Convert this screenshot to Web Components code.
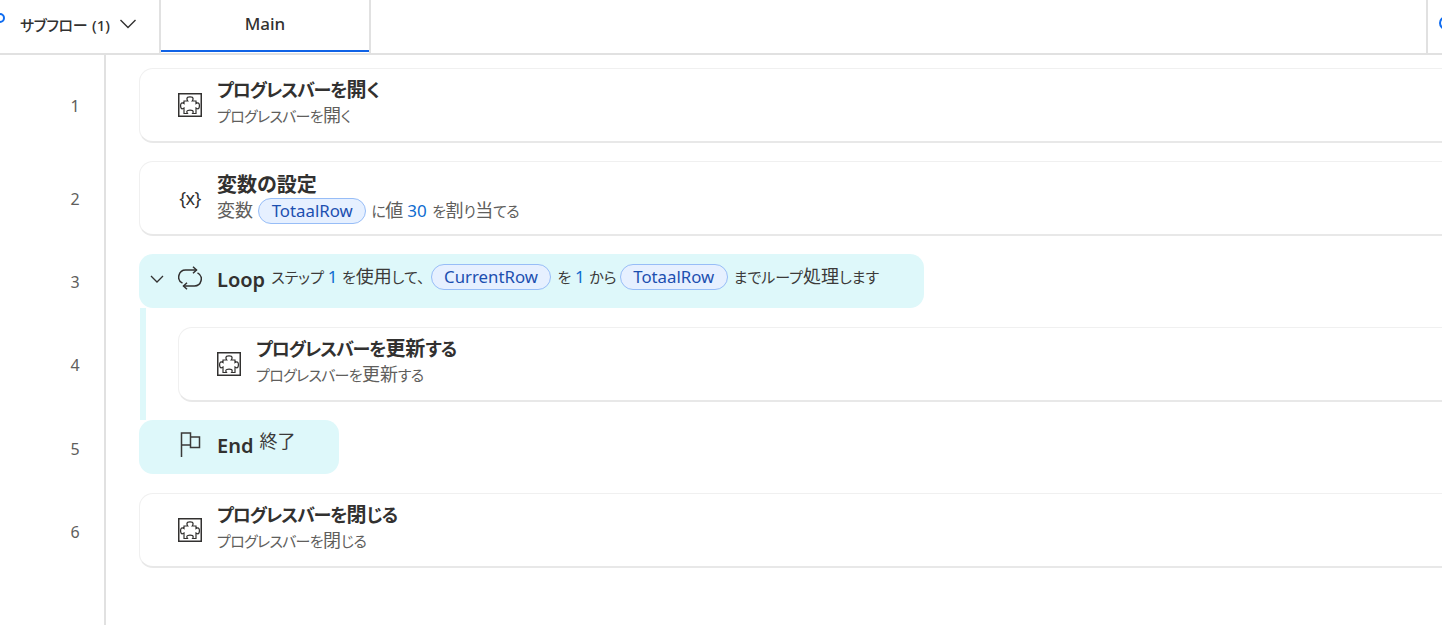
<!DOCTYPE html>
<html lang="ja">
<head>
<meta charset="utf-8">
<title>Main</title>
<style>
  html, body { margin: 0; height: 100%; overflow: hidden; background: #fff; }
  body { font-family: "Noto Sans", "Noto Sans CJK JP", sans-serif; color: #323130; }
  /* kanji run wider than kana in the reference font, so they get their own size */
  .k { font-size: var(--kanji-size, 1em); letter-spacing: 0; }
  .comma { margin-right: 4px; }
</style>
</head>
<body>
<flow-app>
  <flow-tabbar slot="top"></flow-tabbar>
  <flow-row num="1" kind="card">
    <flow-card icon="puzzle">
      <span slot="title">プログレスバーを<span class="k">開</span>く</span>
      プログレスバーを<span class="k">開</span>く
    </flow-card>
  </flow-row>
  <flow-row num="2" kind="card">
    <flow-card icon="vars" chips>
      <span slot="title"><span class="k">変数の設定</span></span>
      <span class="k">変数</span> <flow-chip>TotaalRow</flow-chip> に<span class="k">値</span> <flow-num>30</flow-num> を<span class="k">割</span>り<span class="k">当</span>てる
    </flow-card>
  </flow-row>
  <flow-row num="3" kind="head">
    <flow-block icon="loop" chevron>
      <span slot="title">Loop</span>
      ステップ <flow-num>1</flow-num> を<span class="k">使用</span>して<span class="comma">、</span><flow-chip>CurrentRow</flow-chip> を <flow-num>1</flow-num> から<flow-chip style="margin-left: 3px">TotaalRow</flow-chip> までループ<span class="k">処理</span>します
    </flow-block>
  </flow-row>
  <flow-row num="4" kind="nested">
    <flow-card icon="puzzle">
      <span slot="title">プログレスバーを<span class="k">更新</span>する</span>
      プログレスバーを<span class="k">更新</span>する
    </flow-card>
  </flow-row>
  <flow-row num="5" kind="tail">
    <flow-block icon="flag">
      <span slot="title">End</span>
      <span class="k">終了</span>
    </flow-block>
  </flow-row>
  <flow-row num="6" kind="last">
    <flow-card icon="puzzle">
      <span slot="title">プログレスバーを<span class="k">閉</span>じる</span>
      プログレスバーを<span class="k">閉</span>じる
    </flow-card>
  </flow-row>
</flow-app>

<script>
const ICONS = {
  puzzle: `<svg width="24" height="24" viewBox="0 0 24 24" fill="none" stroke="#323130">
    <rect x="0.75" y="0.75" width="22.5" height="22.5" stroke-width="1.5"/>
    <path stroke-width="1.2" d="M6 8H9.8C9.2 7.2 8.9 6.6 8.9 5.8C8.9 3.3 15.1 3.3 15.1 5.8C15.1 6.6 14.8 7.2 14.2 8H18V10.5C18.7 10 19.2 9.8 19.7 9.8C22 9.8 22 15.8 19.7 15.8C19.2 15.8 18.7 15.6 18 15.1V20.5H14.6C15.1 19.8 15.2 19.3 15.2 18.8C15.2 16.6 8.8 16.6 8.8 18.8C8.8 19.3 9 19.8 9.5 20.5H6V15.1C5.3 15.6 4.8 15.8 4.3 15.8C2 15.8 2 9.8 4.3 9.8C4.8 9.8 5.3 10 6 10.5Z"/>
  </svg>`,
  loop: `<svg width="24" height="24" viewBox="0 0 24 24" fill="none" stroke="#323130" stroke-width="1.5">
    <path d="M18.5 4H8A7 7 0 0 0 4.5 17.2"/>
    <path d="M15 0.8L18.5 4L15 7.2"/>
    <path d="M5.5 20H16A7 7 0 0 0 19.5 6.8"/>
    <path d="M9 16.8L5.5 20L9 23.2"/>
  </svg>`,
  flag: `<svg width="24" height="26" viewBox="0 0 24 26" fill="none" stroke="#3b3a39" stroke-width="1.5">
    <path d="M3.5 25V1H12.5V15.5H21.5V5H12.5"/>
    <path d="M3.5 13H12.5"/>
  </svg>`
};

class FlowApp extends HTMLElement {
  constructor() {
    super();
    this.attachShadow({ mode: 'open' });
    this.shadowRoot.innerHTML = `
      <style>
        :host { display: flex; flex-direction: column; height: 100vh; overflow: hidden; }
        .body { flex: 1; position: relative; display: flex; flex-direction: column; padding-top: 4px; overflow: hidden; }
        .body::before { content: ""; position: absolute; left: 104px; top: 0; bottom: 0; width: 2px; background: #e1e1e1; }
      </style>
      <slot name="top"></slot>
      <div class="body"><slot></slot></div>
    `;
  }
}

class FlowTabbar extends HTMLElement {
  constructor() {
    super();
    this.attachShadow({ mode: 'open' });
    this.shadowRoot.innerHTML = `
      <style>
        :host { display: flex; height: 53px; border-bottom: 2px solid #e1e1e1; overflow: hidden; flex: none; }
        .sub { width: 159px; flex: none; display: flex; align-items: center; gap: 9px; padding: 0 0 5px 20px; box-sizing: border-box; position: relative; font-weight: 500; font-size: 15px; white-space: nowrap; }
        .kana { letter-spacing: -0.4px; font-feature-settings: "palt"; margin-right: 1px; }
        .dot { position: absolute; left: -5px; top: 13px; width: 6px; height: 6px; border: 2px solid #0f6cf0; border-radius: 50%; }
        .main { width: 208px; flex: none; border-left: 2px solid #e1e1e1; border-right: 2px solid #e1e1e1; display: flex; align-items: center; justify-content: center; padding-bottom: 6px; font-weight: 500; font-size: 17px; position: relative; box-sizing: content-box; }
        .main::after { content: ""; position: absolute; left: 0; right: 0; bottom: 1px; height: 2px; background: #0f62e6; }
        .rest { flex: 1; display: flex; justify-content: flex-end; }
        .edge { width: 14px; border-left: 2px solid #e1e1e1; position: relative; }
        .edge::after { content: ""; position: absolute; left: 11px; top: 16px; width: 10px; height: 10px; border: 2.5px solid #0f6cf0; border-radius: 50%; }
      </style>
      <div class="sub">
        <span class="dot"></span>
        <span><span class="kana">サブフロー</span> (1)</span>
        <svg width="18" height="18" viewBox="0 0 18 18" fill="none" stroke="#323130" stroke-width="1.4"><path d="M1.5 5L9 12.5L16.5 5"/></svg>
      </div>
      <div class="main">Main</div>
      <div class="rest"><div class="edge"></div></div>
    `;
  }
}

class FlowRow extends HTMLElement {
  static get observedAttributes() { return ['num']; }
  constructor() {
    super();
    this.attachShadow({ mode: 'open' });
    this.shadowRoot.innerHTML = `
      <style>
        :host { display: flex; flex: none; }
        .num { width: 106px; flex: none; box-sizing: border-box; padding-left: 44px; font-size: 16px; color: #605e5c; display: flex; align-items: center; justify-content: center; }
        .slot { flex: 1; min-width: 0; padding-left: 33px; margin-right: -30px; }
        :host([kind="card"]) .slot { padding-top: 9px; padding-bottom: 9px; }
        :host([kind="head"]) .slot { padding-top: 9px; }
        :host([kind="head"]) .num { padding-top: 11px; }
        :host([kind="nested"]) .slot { margin-left: 34px; padding: 19px 0 18px 32px; border-left: 6px solid #def8fa; }
        :host([kind="nested"]) .num { padding-top: 2px; }
        :host([kind="tail"]) .num { padding-top: 4px; }
        :host([kind="last"]) .slot { padding-top: 19px; padding-bottom: 9px; }
        :host([kind="last"]) .num { padding-top: 12px; }
      </style>
      <div class="num"></div>
      <div class="slot"><slot></slot></div>
    `;
  }
  attributeChangedCallback() {
    this.shadowRoot.querySelector('.num').textContent = this.getAttribute('num');
  }
}

class FlowCard extends HTMLElement {
  constructor() {
    super();
    this.attachShadow({ mode: 'open' });
  }
  connectedCallback() {
    const icon = this.getAttribute('icon');
    const glyph = icon === 'vars' ? '<span class="vars">{x}</span>' : ICONS[icon];
    this.shadowRoot.innerHTML = `
      <style>
        :host { display: flex; align-items: center; height: 75px; box-sizing: border-box; border: 1px solid #f0f0f0; border-bottom: 2px solid #e8e8e8; border-radius: 14px; background: #fff; padding-left: 38px; font-feature-settings: "palt"; --num-gap: 1px; }
        .icon { width: 24px; height: 24px; flex: none; margin-right: 15px; display: flex; align-items: center; justify-content: center; margin-top: -1px; }
        .vars { font-size: 18px; color: #323130; white-space: nowrap; letter-spacing: -0.6px; }
        .text { margin-top: -4px; }
        :host([chips]) .text { margin-top: 2px; }
        .title { --kanji-size: 20px; font-size: 18px; letter-spacing: -1.1px; font-weight: 600; line-height: 26px; color: #323130; white-space: nowrap; }
        .sub { --kanji-size: 18px; font-size: 15px; letter-spacing: -0.7px; line-height: 25px; color: #605e5c; white-space: nowrap; }
      </style>
      <div class="icon">${glyph}</div>
      <div class="text">
        <div class="title"><slot name="title"></slot></div>
        <div class="sub"><slot></slot></div>
      </div>
    `;
  }
}

class FlowBlock extends HTMLElement {
  constructor() {
    super();
    this.attachShadow({ mode: 'open' });
  }
  connectedCallback() {
    const chevron = this.hasAttribute('chevron')
      ? `<svg class="chev" width="16" height="16" viewBox="0 0 16 16" fill="none" stroke="#323130" stroke-width="1.3"><path d="M2 5L8 11L14 5"/></svg>`
      : '';
    this.shadowRoot.innerHTML = `
      <style>
        :host { display: inline-flex; align-items: center; height: 54px; box-sizing: border-box; background: #def8fa; border-radius: 14px; padding: 0 45px 0 39px; position: relative; font-feature-settings: "palt"; vertical-align: top; }
        :host([icon="flag"]) { padding-right: 44px; }
        .chev { position: absolute; left: 10px; top: 17px; }
        .icon { width: 24px; height: 26px; flex: none; margin-right: 15px; margin-top: -5px; }
        .title { font-size: 20px; font-weight: 600; color: #323130; margin-right: 6px; margin-top: -3px; white-space: nowrap; }
        .sub { --kanji-size: 18px; font-size: 15px; color: #3b3a39; white-space: nowrap; margin-top: -8px; }
        :host([icon="flag"]) .sub { margin-top: -15px; }
      </style>
      ${chevron}
      <div class="icon">${ICONS[this.getAttribute('icon')]}</div>
      <div class="title"><slot name="title"></slot></div>
      <div class="sub"><slot></slot></div>
    `;
  }
}

class FlowChip extends HTMLElement {
  constructor() {
    super();
    this.attachShadow({ mode: 'open' });
    this.shadowRoot.innerHTML = `
      <style>
        :host { display: inline-block; box-sizing: border-box; height: 26px; line-height: 24px; padding: 0 12.5px; margin: 0 2px 2px; border: 1px solid #97bdf7; border-radius: 13px; background: #e6f0ff; color: #1c4fb0; font-size: 16.8px; letter-spacing: 0; vertical-align: middle; }
      </style>
      <slot></slot>
    `;
  }
}

class FlowNum extends HTMLElement {
  constructor() {
    super();
    this.attachShadow({ mode: 'open' });
    this.shadowRoot.innerHTML = `
      <style>:host { display: inline; color: #0f6cd0; font-size: 17px; letter-spacing: 0; margin: 0 var(--num-gap, 0); }</style>
      <slot></slot>
    `;
  }
}

customElements.define('flow-app', FlowApp);
customElements.define('flow-tabbar', FlowTabbar);
customElements.define('flow-row', FlowRow);
customElements.define('flow-card', FlowCard);
customElements.define('flow-block', FlowBlock);
customElements.define('flow-chip', FlowChip);
customElements.define('flow-num', FlowNum);
</script>
</body>
</html>
